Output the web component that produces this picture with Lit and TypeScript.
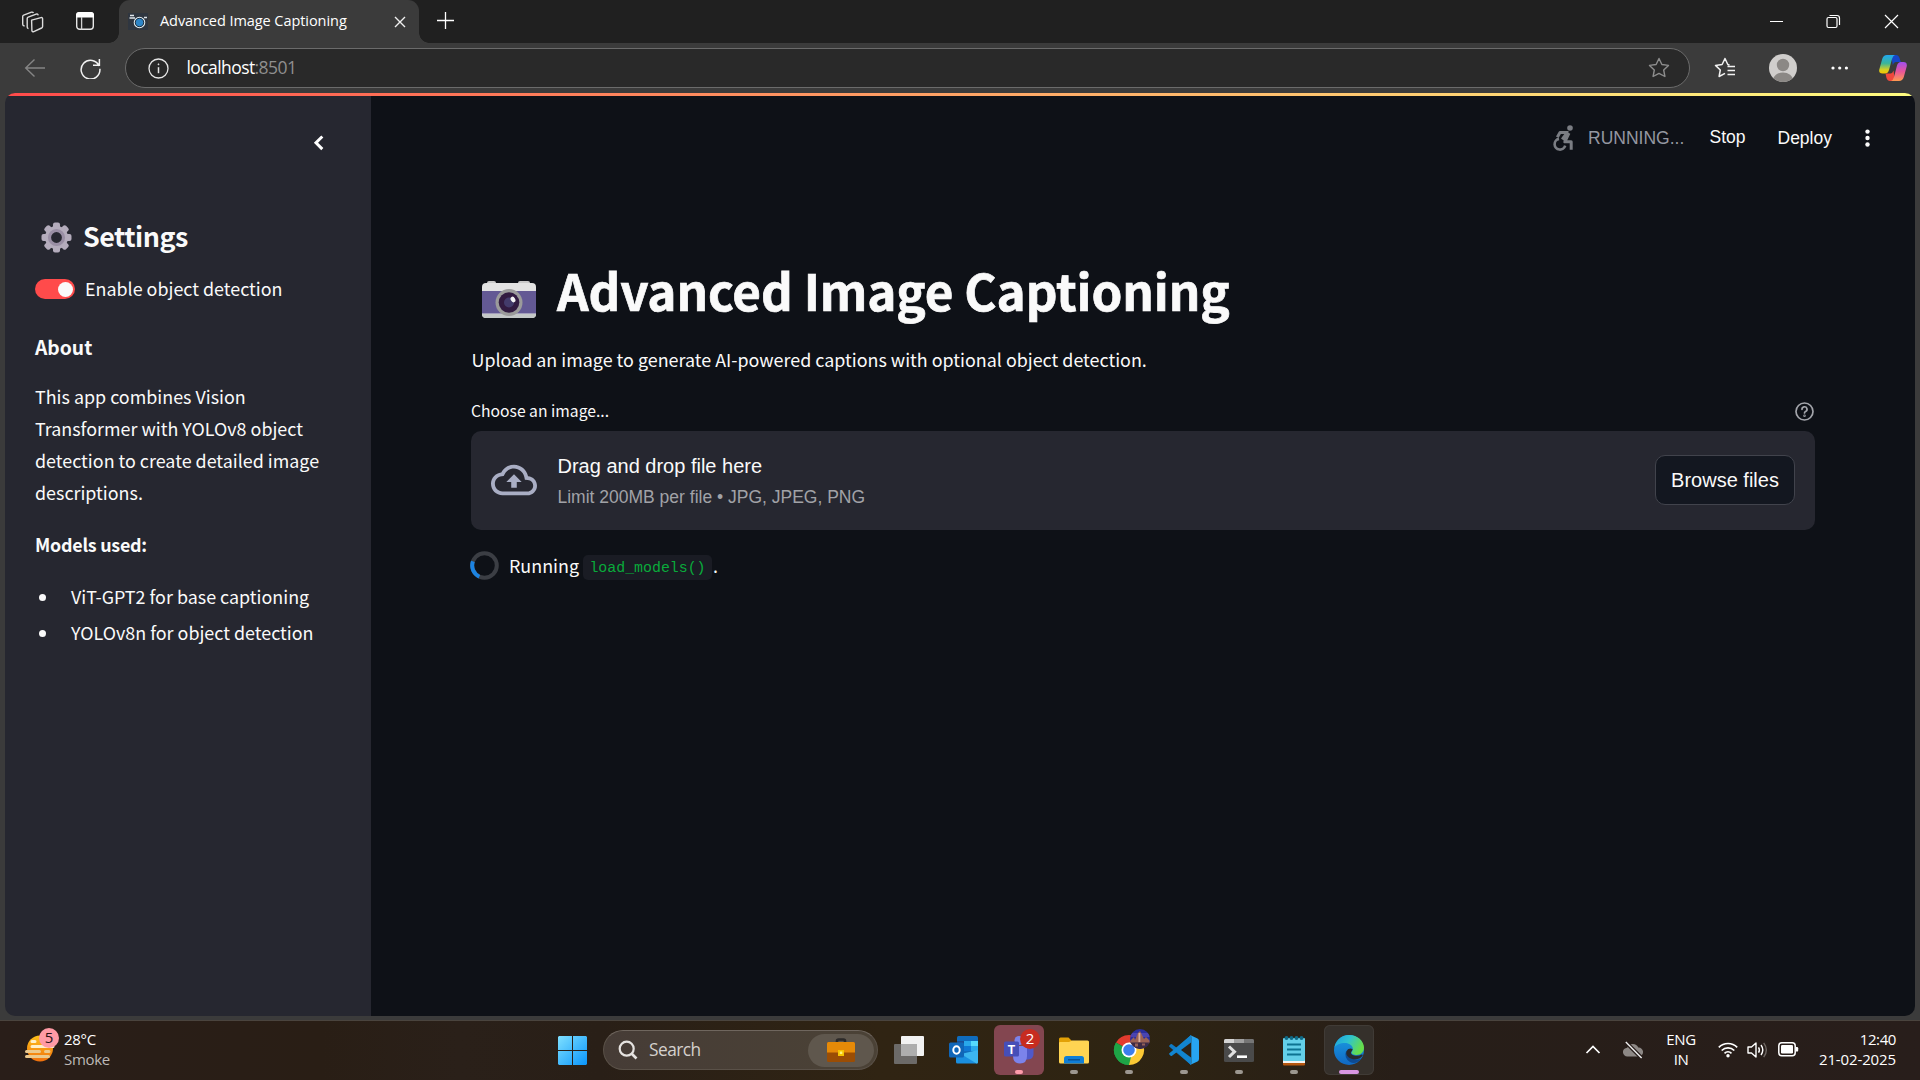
import { LitElement, html, css, svg } from "lit";
import { customElement } from "lit/decorators.js";

@customElement("browser-chrome")
class BrowserChrome extends LitElement {
  static styles = css`
    :host { display: block; font-family: "Open Sans", "Noto Sans", sans-serif; color: #fff; }
    svg { display: block; flex: none; }
    .strip { height: 43px; background: #202020; display: flex; align-items: flex-start; }
    .i1 { margin: 11px 0 0 21px; }
    .i2 { margin: 12px 0 0 32px; }
    .tab { margin-left: 25px; width: 300px; height: 43px; background: #3b3b3b; border-radius: 11px 11px 0 0; display: flex; position: relative; }
    .tab::before, .tab::after { content: ""; position: absolute; bottom: 0; width: 10px; height: 10px; }
    .tab::before { left: -10px; background: radial-gradient(circle at 0 0, transparent 9.5px, #3b3b3b 10px); }
    .tab::after { right: -10px; background: radial-gradient(circle at 100% 0, transparent 9.5px, #3b3b3b 10px); }
    .fav { margin: 13px 0 0 9px; }
    .title { margin: 11px 0 0 12px; width: 234px; font-size: 14.5px; line-height: 20px; letter-spacing: -0.06px; white-space: nowrap; flex: none; }
    .tx { margin-top: 16px; }
    .plus { margin: 12px 0 0 18px; }
    .win { margin-left: auto; display: flex; margin-right: 21px; gap: 43px; padding-top: 14px; }
    .min { margin-right: -1px; }
    .bar { height: 50px; background: #3b3b3b; display: flex; align-items: center; }
    .back { margin-left: 24px; }
    .reload { margin-left: 35px; }
    .pill { box-sizing: border-box; margin-left: 24px; width: 1565px; height: 40px; border: 1px solid #6b6b6b; border-radius: 20px; background: #292929; display: flex; align-items: center; padding: 0 19px 0 21.5px; }
    .url { margin-left: 18px; font-size: 17.5px; letter-spacing: -0.58px; line-height: 24px; margin-top: -2px; }
    .port { color: #8f8f8f; }
    .star { margin-left: auto; }
    .fl { margin-left: 24px; }
    .av { margin-left: 33px; }
    .dots { margin-left: 34px; }
    .cop { margin-left: 30px; }
  `;
  render() {
    return html`
      <div class="strip">
        <svg class="i1" width="23" height="22" viewBox="0 0 23 22" fill="none" stroke="#dcdcdc" stroke-width="1.4" stroke-linejoin="round">
          <path d="M10.6 9.2 20 6.6q1.6-.3 1.6 1.3v7.6q0 1-1 1.5l-7.8 3.6q-1.6.6-1.9-1zM7.5 17.5q-1.3-.2-1.3-1.6V7.6q0-1.1 1-1.5l8-3q1.7-.5 2 1.2M3.6 15q-1.9-.3-1.9-1.8V5.6q0-1.1 1-1.500L10.5 1.2q1.4-.4 1.9.8"/>
        </svg>
        <svg class="i2" width="18" height="18" viewBox="0 0 18 18"><rect x=".7" y=".7" width="16.6" height="16.6" rx="3" fill="none" stroke="#e6e6e6" stroke-width="1.4"/><path d="M0 5.500V3a3 3 0 0 1 3-3h12a3 3 0 0 1 3 3v2.500z" fill="#fff"/><path d="M5.600 5v12.500" stroke="#d0d0d0" stroke-width="1.3"/></svg>
        <div class="tab">
          <svg class="fav" width="20" height="17" viewBox="0 0 20 17"><rect width="20" height="17" fill="#2f3640"/><path d="M2 2.500h4M1.500 5h5.500M16 4.500h3" stroke="#dfe6ea" stroke-width="1.6"/><circle cx="11.5" cy="9.500" r="5.200" fill="#2d86c9" stroke="#dfe6ea" stroke-width="1.2"/><circle cx="11.5" cy="9.500" r="4.200" fill="none" stroke="#22303c" stroke-width="1"/></svg>
          <div class="title">Advanced Image Captioning</div>
          <svg class="tx" width="12" height="12" viewBox="0 0 12 12" stroke="#f0f0f0" stroke-width="1.4"><path d="M1 1l10 10M11 1L1 11"/></svg>
        </div>
        <svg class="plus" width="18" height="18" viewBox="0 0 18 18" stroke="#fff" stroke-width="1.3"><path d="M8.500 0v17M0 8.500h17"/></svg>
        <div class="win">
          <svg class="min" width="15" height="15" viewBox="0 0 15 15" stroke="#fff"><path d="M1 7.500h13"/></svg>
          <svg width="15" height="15" viewBox="0 0 15 15" fill="none" stroke="#fff" stroke-width="1.2"><rect x="1" y="3.500" width="10" height="10" rx="1.5"/><path d="M3.500 1.500h7.500a2.500 2.500 0 0 1 2.500 2.500v7"/></svg>
          <svg width="15" height="15" viewBox="0 0 15 15" stroke="#fff" stroke-width="1.2"><path d="M1 1l13 13M14 1L1 14"/></svg>
        </div>
      </div>
      <div class="bar">
        <svg class="back" width="21" height="20" viewBox="0 0 21 20" fill="none" stroke="#858585" stroke-width="1.4"><path d="M21 10H1.500M10.500 1.500L1.700 10l8.800 8.500"/></svg>
        <svg class="reload" width="21" height="21" viewBox="0 0 21 21" fill="none" stroke="#f2f2f2" stroke-width="1.5"><path d="M19.200 8A9.400 9.400 0 1 0 19.900 10.800M19.400 1v6.300H13"/></svg>
        <div class="pill">
          <svg width="21" height="21" viewBox="0 0 21 21" fill="none" stroke="#e6e6e6" stroke-width="1.3"><circle cx="10.5" cy="10.5" r="9.5"/><path d="M10.500 9.200v6" stroke-width="1.5"/><circle cx="10.5" cy="6.3" r=".6" fill="#e6e6e6" stroke-width=".6"/></svg>
          <div class="url">localhost<span class="port">:8501</span></div>
          <svg class="star" width="22" height="22" viewBox="0 0 22 22" fill="none" stroke="#8d8d8d" stroke-width="1.4" stroke-linejoin="round"><path d="M11 1.500l2.900 6 6.600.9-4.800 4.600 1.200 6.500L11 16.400l-5.900 3.100 1.200-6.500L1.500 8.400l6.600-.9z"/></svg>
        </div>
        <svg class="fl" width="22" height="22" viewBox="0 0 22 22" fill="none" stroke="#f2f2f2" stroke-width="1.5" stroke-linejoin="round"><path d="M15.500 8L13.800 7.500 11 1.500l-2.900 6-6.600.9L6.300 13l-1.200 6.500L11 16.400M13.500 9.500H21M13.500 13.500H21M13.500 17.500H21"/></svg>
        <svg class="av" width="28" height="28" viewBox="0 0 28 28"><defs><clipPath id="c"><circle cx="14" cy="14" r="14"/></clipPath></defs><circle cx="14" cy="14" r="14" fill="#d0cecc"/><g clip-path="url(#c)" fill="#8b8885"><circle cx="14" cy="11" r="6.2"/><ellipse cx="14" cy="26" rx="10" ry="7.5"/></g></svg>
        <svg class="dots" width="18" height="4" viewBox="0 0 18 4" fill="#fff"><circle cx="2" cy="2" r="1.6"/><circle cx="8.7" cy="2" r="1.6"/><circle cx="15.4" cy="2" r="1.6"/></svg>
        <svg class="cop" width="28" height="26" viewBox="0 0 28 26">
          <defs>
            <linearGradient id="a" x1="0" y1="0" x2="0" y2="1"><stop offset="0" stop-color="#21a7f0"/><stop offset=".45" stop-color="#3ab59a"/><stop offset=".8" stop-color="#d8d020"/><stop offset="1" stop-color="#f5c400"/></linearGradient>
            <linearGradient id="b" x1="0" y1="0" x2="0" y2="1"><stop offset="0" stop-color="#a04ff0"/><stop offset=".5" stop-color="#e8559a"/><stop offset="1" stop-color="#ff9a50"/></linearGradient>
          </defs>
          <path d="M12 0h5q2.500 0 3.500 3l1.300 4h-5q-2 0-3 3z" fill="#1646c8"/>
          <path d="M16 26h-5q-2.500 0-3.500-3L6.500 18.500h5q2 0 3-3z" fill="#f0483c"/>
          <path d="M8 0h8q-2 .5-3 4l-3 11q-1 3.500-4 3.500H3.500Q-.5 18.500.3 14.500L3.200 4Q4.400 0 8 0z" fill="url(#a)"/>
          <path d="M20 26h-8q2-.5 3-4l3-11.500Q19 7 22 7h2.500Q28.500 7 27.700 11.500L24.800 22Q23.600 26 20 26z" fill="url(#b)"/>
        </svg>
      </div>`;
  }
}

@customElement("side-panel")
class SidePanel extends LitElement {
  static styles = css`
    :host { display: block; width: 366px; height: 923px; background: #262730; box-sizing: border-box; padding-left: 30px; font-family: "Noto Sans CJK SC", "Open Sans", sans-serif; color: #fafafa; font-size: 17.9px; line-height: 32px; white-space: nowrap; }
    svg { display: block; }
    .chev { padding: 42px 0 0 278px; height: 82px; }
    .h2 { display: flex; align-items: center; height: 36px; font-size: 26.9px; line-height: 38px; font-weight: 700; letter-spacing: -0.5px; padding-top: 1px; margin-bottom: -1px; }
    .gear { margin: 2px 11.5px 0 5.5px; }
    .sw { display: flex; align-items: center; margin-top: 19px; height: 32px; }
    .track { width: 40px; height: 20px; border-radius: 10px; background: #ff4b4b; display: flex; align-items: center; justify-content: flex-end; padding-right: 2px; box-sizing: border-box; margin: 2px 10px 0 0; }
    .knob { width: 15px; height: 15px; border-radius: 50%; background: #fafafa; }
    .h3 { margin-top: 27px; font-weight: 700; font-size: 19.3px; }
    .p { margin-top: 17px; }
    .b { margin-top: 20px; font-weight: 700; letter-spacing: -0.25px; }
    .list { margin-top: 20px; display: flex; flex-direction: column; gap: 4px; }
    .li { display: flex; align-items: center; }
    .dot { width: 7px; height: 7px; border-radius: 50%; background: #fafafa; margin: 2px 25px 0 4px; }
  `;
  render() {
    const teeth = [0, 45, 90, 135, 180, 225, 270, 315];
    return html`
      <div class="chev"><svg width="12" height="16" viewBox="0 0 12 16" fill="none" stroke="#fff" stroke-width="3"><path d="M9.300 1.500L3 7.800l6.300 6.300"/></svg></div>
      <div class="h2">
        <svg class="gear" width="31" height="31" viewBox="0 0 31 31">
          <g fill="#b4acbc"><circle cx="15.5" cy="15.5" r="11.5"/>${teeth.map((a) => svg`<rect x="12" y=".5" width="7" height="8" rx="2" transform="rotate(${a} 15.5 15.5)"/>`)}</g>
          <circle cx="15.5" cy="15.5" r="7" fill="#262730" stroke="#998ea4" stroke-width="3.2"/>
        </svg><span>Settings</span>
      </div>
      <div class="sw"><div class="track"><div class="knob"></div></div><span>Enable object detection</span></div>
      <div class="h3">About</div>
      <div class="p">This app combines Vision<br />Transformer with YOLOv8 object<br />detection to create detailed image<br />descriptions.</div>
      <div class="b">Models used:</div>
      <div class="list">
        <div class="li"><div class="dot"></div><span>ViT-GPT2 for base captioning</span></div>
        <div class="li"><div class="dot"></div><span>YOLOv8n for object detection</span></div>
      </div>`;
  }
}

@customElement("main-view")
class MainView extends LitElement {
  static styles = css`
    :host { display: block; width: 1544px; height: 923px; background: #0e1117; box-sizing: border-box; font-family: "Noto Sans CJK SC", "Open Sans", sans-serif; color: #fafafa; font-size: 17.9px; line-height: 32px; white-space: nowrap; }
    svg { display: block; flex: none; }
    .head { display: flex; height: 162px; padding-left: 1181px; font: 17.5px/24px "Liberation Sans", Arial, sans-serif; align-items: flex-start; }
    .acc { margin-top: 32px; }
    .run { margin: 33px 0 0 14px; width: 121.5px; color: #9497a1; }
    .stop { margin: 32px 0 0 0; width: 68px; }
    .dep { margin: 33px 0 0 0; width: 87.5px; }
    .keb { margin-top: 36px; }
    .col { padding: 0 100px; }
    .h1 { display: flex; height: 66px; font-size: 49.4px; line-height: 66px; font-weight: 700; letter-spacing: -0.14px; -webkit-text-stroke: 0.7px #fafafa; }
    .h1 span { margin-top: 2px; }
    .cam { margin: 26px 20px 0 10px; }
    .p { margin-top: 22px; padding-left: 0.5px; }
    .lab { margin-top: 22px; display: flex; justify-content: space-between; align-items: center; height: 26px; font-size: 15.7px; line-height: 26px; }
    .lab span { padding-top: 1px; }
    .help { margin: 3px 1px 0 0; }
    .drop { margin-top: 8px; height: 99px; background: #262730; border-radius: 10px; display: flex; align-items: center; padding: 0 20px; font-family: "Liberation Sans", Arial, sans-serif; }
    .cloud { margin-top: -1px; }
    .two { margin-left: 20.5px; display: flex; flex-direction: column; padding-top: 2px; }
    .l1 { font-size: 20px; line-height: 30px; }
    .l2 { margin-top: 1px; font-size: 17.5px; line-height: 30px; color: #a1a2a7; }
    .btn { margin: -1px 0 0 auto; box-sizing: border-box; width: 140px; height: 50px; border: 1px solid #41434c; border-radius: 10px; background: #131720; display: flex; align-items: center; justify-content: center; font-size: 20px; padding-bottom: 1px; }
    .spin { margin-top: 19px; display: flex; align-items: center; height: 32px; }
    .ring { margin: 1px 10px 0 -1px; }
    .code { margin-left: 4px; margin-top: 5px; box-sizing: border-box; height: 25px; width: 129px; text-align: center; border-radius: 5px; background: #1a1c24; color: #09ab3b; font: 14.9px/26px "Liberation Mono", monospace; }
    .end { margin-left: 1px; }
  `;
  render() {
    return html`
      <div class="head">
        <svg class="acc" width="22" height="27" viewBox="0 0 22 27"><circle cx="18" cy="3" r="2.8" fill="#7a7d83"/><path d="M17 8.200L12.800 16.800h6.400v8M5.300 12.200L8 7.600h8.500" fill="none" stroke="#7a7d83" stroke-width="3" stroke-linejoin="round"/><path d="M13 8l3.500 2-3.500 6.500-4-3z" fill="#7a7d83"/><path d="M7 13.900a5.400 5.400 0 1 0 6.200 6.800" fill="none" stroke="#7a7d83" stroke-width="2.6"/></svg>
        <div class="run">RUNNING...</div>
        <div class="stop">Stop</div>
        <div class="dep">Deploy</div>
        <svg class="keb" width="6" height="18" viewBox="0 0 6 18" fill="#fafafa"><circle cx="2.5" cy="2.6" r="2.2"/><circle cx="2.5" cy="9" r="2.2"/><circle cx="2.5" cy="15.5" r="2.2"/></svg>
      </div>
      <div class="col">
        <div class="h1">
          <svg class="cam" width="56" height="38" viewBox="0 0 56 38"><rect x="6" y="0" width="9" height="5" rx="2" fill="#c9c9c9"/><rect x="37" y="0" width="12" height="5" rx="2" fill="#c9c9c9"/><rect x="1" y="2" width="54" height="35" rx="4" fill="#e3e3e3"/><path d="M1 33h54q0 4-4 4H5q-4 0-4-4z" fill="#c4c8c8"/><rect x="1" y="10" width="54" height="22.5" fill="#635994"/><circle cx="28" cy="21.5" r="13.5" fill="#9b9b9b"/><circle cx="28" cy="21.5" r="10.3" fill="#321b41"/><circle cx="28" cy="21.5" r="5" fill="#433b6b"/><ellipse cx="32" cy="18.5" rx="2.2" ry="3" fill="#f4f4f4" transform="rotate(-30 32 18.5)"/></svg>
          <span>Advanced Image Captioning</span>
        </div>
        <div class="p">Upload an image to generate AI-powered captions with optional object detection.</div>
        <div class="lab"><span>Choose an image...</span>
          <svg class="help" width="19" height="19" viewBox="0 0 19 19" fill="none" stroke="#a3a5ab" stroke-width="1.7" stroke-linecap="round"><circle cx="9.5" cy="9.5" r="8.5"/><path d="M7 7.300a2.500 2.500 0 1 1 3.600 2.200q-1.100.6-1.100 1.500"/><circle cx="9.5" cy="13.7" r=".4"/></svg>
        </div>
        <div class="drop">
          <svg class="cloud" width="46" height="46" viewBox="0 0 24 24" fill="#a9aec4"><path d="M19.350 10.040C18.670 6.590 15.640 4 12 4 9.110 4 6.600 5.640 5.350 8.040 2.340 8.360 0 10.910 0 14c0 3.310 2.690 6 6 6h13c2.760 0 5-2.240 5-5 0-2.640-2.050-4.780-4.650-4.960zM19 18H6c-2.210 0-4-1.790-4-4 0-2.050 1.530-3.760 3.560-3.970l1.070-.110.500-.950C8.080 7.140 9.940 6 12 6c2.620 0 4.880 1.860 5.390 4.430l.300 1.500 1.530.110c1.560.100 2.780 1.410 2.780 2.960 0 1.650-1.350 3-3 3zM8 13h2.550v3h2.900v-3H16l-4-4z"/></svg>
          <div class="two"><span class="l1">Drag and drop file here</span><span class="l2">Limit 200MB per file • JPG, JPEG, PNG</span></div>
          <div class="btn">Browse files</div>
        </div>
        <div class="spin">
          <svg class="ring" width="29" height="29" viewBox="0 0 29 29" fill="none" stroke-width="4"><circle cx="14.5" cy="14.5" r="12.3" stroke="#3b3e44"/><path d="M2.900 10.400A12.300 12.300 0 0 0 9.300 25.700" stroke="#1c83e1"/></svg>
          <span>Running</span><span class="code">load_models()</span><span class="end">.</span>
        </div>
      </div>`;
  }
}

@customElement("task-bar")
class TaskBar extends LitElement {
  static styles = css`
    :host { display: flex; box-sizing: border-box; height: 60px; border-top: 1px solid #4a443e; background: linear-gradient(90deg, #291e19 0, #291e15 320px, #2a2019 460px, #291f17 600px, #302413 880px, #2e2412 1130px, #271e18 1400px, #281e1b 1920px); font: 15px/20px "Open Sans", "Noto Sans", sans-serif; color: #fff; align-items: flex-start; white-space: nowrap; }
    svg { display: block; flex: none; }
    .wx { margin: 5px 0 0 24px; width: 36px; }
    .wt { margin: 8px 0 0 4px; width: 494px; letter-spacing: -0.3px; }
    .dim { color: #bdb9b6; }
    .logo { margin-top: 15px; }
    .search { margin: 9px 0 0 16px; box-sizing: border-box; width: 275px; height: 40px; border: 1px solid #5a5148; border-top-color: #6f665e; border-radius: 20px; background: linear-gradient(90deg, #463c36, #4b4236); display: flex; align-items: center; padding: 0 3px 0 13.5px; }
    .st { margin: 0 0 0 11.5px; font-size: 17.3px; color: #d5d1cd; letter-spacing: -0.5px; line-height: 24px; }
    .case { margin-left: auto; width: 66px; height: 33px; border-radius: 17px; background: #5f574d; display: flex; align-items: center; justify-content: center; }
    .apps { margin: 4px 0 0 6px; display: flex; gap: 5px; }
    .app { width: 50px; height: 50px; border-radius: 6px; position: relative; display: flex; align-items: center; justify-content: center; }
    .teams { background: #834650; }
    .edge { background: #35302b; box-shadow: inset 0 0 0 1px #403b36; }
    .ind { position: absolute; bottom: 1px; left: 21px; width: 8px; height: 4px; border-radius: 2px; background: #9c9790; }
    .pink { background: #ff9cab; }
    .wide { left: 15px; width: 20px; background: #d896e2; }
    .badge { position: absolute; left: 26px; top: 4px; width: 20px; height: 20px; border-radius: 50%; background: #c72c20; text-align: center; font-size: 15px; line-height: 19px; }
    .tray { display: flex; margin-left: 211px; align-items: flex-start; }
    .ca { margin-top: 24px; }
    .od { margin: 20px 0 0 22px; }
    .eng { margin: 8px 0 0 17px; width: 42px; text-align: center; letter-spacing: -0.4px; }
    .wf { margin: 20px 0 0 16px; }
    .vo { margin: 20px 0 0 9px; }
    .ba { margin: 21px 0 0 10px; }
    .clock { margin: 8px 0 0 9px; width: 88px; text-align: right; letter-spacing: -0.4px; }
    .date { letter-spacing: -0.12px; }
  `;
  render() {
    const ind = html`<div class="ind"></div>`;
    return html`
      <svg class="wx" width="36" height="36" viewBox="0 0 36 36">
        <defs><linearGradient id="s" x1="0" y1="0" x2="0" y2="1"><stop offset="0" stop-color="#ffc21a"/><stop offset="1" stop-color="#f0700c"/></linearGradient></defs>
        <circle cx="16" cy="22.5" r="13" fill="url(#s)"/>
        <g stroke-linecap="round" stroke-width="3"><path d="M8 15.500h3M8 20.500h21" stroke="#fff0c8"/><path d="M2.500 25.500h13M21.500 25.500h3.500M2.500 30.500h22" stroke="#ecc98c"/></g>
        <circle cx="25" cy="12" r="10" fill="#ff9aa5"/>
        <text x="25" y="17.3" font-size="15" text-anchor="middle" fill="#2a1115">5</text>
      </svg>
      <div class="wt">28°C<br /><span class="dim">Smoke</span></div>
      <svg class="logo" width="29" height="29" viewBox="0 0 29 29"><defs><linearGradient id="w" x1="0" y1="0" x2="1" y2="1"><stop offset="0" stop-color="#7fe0ff"/><stop offset="1" stop-color="#0a95fb"/></linearGradient></defs><path d="M1 0h13v14H0V1zM15 0h13l1 1v13H15zM0 15h14v14H1l-1-1zM15 15h14v13l-1 1H15z" fill="url(#w)"/></svg>
      <div class="search">
        <svg width="20" height="20" viewBox="0 0 20 20" fill="none" stroke="#e6e3e0" stroke-width="2.2"><circle cx="8.7" cy="8.7" r="7"/><path d="M13.500 13.500l5 5" stroke-width="2.6"/></svg>
        <div class="st">Search</div>
        <div class="case"><svg width="28" height="24" viewBox="0 0 28 24"><path d="M10 5V3q0-1.500 1.500-1.500h5Q18 1.500 18 3v2" fill="none" stroke="#2c2a29" stroke-width="2.6"/><rect y="4" width="28" height="20" rx="1.5" fill="#9a4d05"/><path d="M0 14.500V5.500Q0 4 1.500 4h25Q28 4 28 5.500v9z" fill="#e68a08"/><rect x="11" y="12" width="6" height="6" fill="#f5c400"/><rect x="12.8" y="13.5" width="2.5" height="2.5" fill="#fff27a"/></svg></div>
      </div>
      <div class="apps">
        <div class="app"><svg width="30" height="28" viewBox="0 0 30 28"><rect y="8" width="23" height="20" rx="1" fill="#6c6a68"/><rect x="7" y="0" width="23" height="20" rx="1" fill="#f2f2f2"/><path d="M7 8h16v12H7z" fill="#aeaeae"/></svg></div>
        <div class="app"><svg width="30" height="28" viewBox="0 0 30 28"><rect x="8" y="0" width="21" height="18" rx="1.5" fill="#0f6cbd"/><path d="M8 5h7v5H8z" fill="#1a4f96"/><path d="M15 5h7v5h-7z" fill="#29a8ea"/><path d="M22 5h7v5h-7z" fill="#55d9fb"/><path d="M15 10h7v5h-7z" fill="#0f78d4"/><path d="M22 10h7v5h-7z" fill="#29a8ea"/><path d="M7 14l11 7 11-7v12q0 1.500-1.500 1.500h-19Q7 27.500 7 26z" fill="#1a8fe0"/><path d="M29 14v12q0 1.500-1.500 1.500L12 18z" fill="#3cb6f0"/><rect y="6.5" width="15" height="15" rx="1.5" fill="#1066b8"/><ellipse cx="7.5" cy="14" rx="3.2" ry="3.7" fill="none" stroke="#fff" stroke-width="2"/></svg></div>
        <div class="app teams">
          <svg width="30" height="28" viewBox="0 0 30 28"><circle cx="15" cy="4.5" r="4.5" fill="#7b83eb"/><path d="M19 10h8q2.500 0 2.500 2.500V18q0 5-5.500 5.500h-5z" fill="#5059c9"/><path d="M9 10h14v10q0 7.500-7 7.500T9 20z" fill="#7b83eb"/><rect y="5.5" width="15" height="15" rx="1.5" fill="#464eb8"/><text x="7.5" y="17.5" font-family="Liberation Sans" font-weight="700" font-size="12" text-anchor="middle" fill="#fff">T</text></svg>
          <div class="badge">2</div><div class="ind pink"></div>
        </div>
        <div class="app"><svg width="30" height="27" viewBox="0 0 30 27"><path d="M0 2Q0 .5 1.500.500h8L13 4h15q2 0 2 2v6H0z" fill="#e2a106"/><path d="M0 6q0-1 1-1h9l3-1.500h15.500Q30 3.500 30 5v20q0 1.500-1.500 1.500h-27Q0 26.500 0 25z" fill="#ffd452"/><path d="M5 26.500v-5Q5 19 7.500 19h15q2.500 0 2.500 2.500v5z" fill="#0f7ed6"/><path d="M9 22.800h12" stroke="#0a4d8c" stroke-width="1.3"/></svg>${ind}</div>
        <div class="app"><svg width="42" height="42" viewBox="0 0 42 42">
          <defs><clipPath id="av"><circle cx="32" cy="10" r="10"/></clipPath></defs>
          <g transform="translate(6 6)"><path d="M15 15L2 7.500A15 15 0 0 1 28 7.500z" fill="#e33b2e"/><path d="M15 15L28 7.500A15 15 0 0 1 15 30z" fill="#fcc934"/><path d="M15 15v15A15 15 0 0 1 2 7.500z" fill="#1ea446"/><path d="M15 7.500h13L21 19 15 30l4-11z" fill="#fcc934"/><path d="M2 7.500L9 19l8 3-2 8A15 15 0 0 1 2 7.500z" fill="#1ea446"/><circle cx="15" cy="15" r="7.5" fill="#fff"/><circle cx="15" cy="15" r="5.8" fill="#3b7ded"/></g>
          <g clip-path="url(#av)"><path d="M22 0h20v20H22z" fill="#2b2f9e"/><path d="M22 4h20v4H22z" fill="#4a44b0"/><path d="M22 12l4-4 1 3 3-7 2-2 1 2 3 6 2-2 4 4v3H22z" fill="#9c6254"/><path d="M30.500 4h1.800v9h-1.800z" fill="#d8b0a0"/><path d="M22 13.500h20V20H22z" fill="#3d2a44"/><path d="M27 14.500h3v3h-3zM34 14.500h3v2h-3z" fill="#94605a"/></g></svg>${ind}</div>
        <div class="app"><svg width="30" height="30" viewBox="0 0 30 30"><path d="M22 0L8 13 3 9.300Q2.300 8.800 1.600 9.300L.400 10.400q-.6.700 0 1.400L22 30z" fill="#0f7ac5"/><path d="M22 30L8 17l-5 3.700q-.7.500-1.400 0L.400 19.600q-.6-.7 0-1.400L22 0z" fill="#1285d0"/><path d="M22 7.500L12 15l10 7.500z" fill="#2c2318"/><path d="M21.500.200L28.500 3.500Q30 4.200 30 6v18q0 1.800-1.500 2.500L21.500 29.800q.8-.6.8-2V2.200q0-1.400-.8-2z" fill="#27a5f2"/></svg>${ind}</div>
        <div class="app"><svg width="30" height="23" viewBox="0 0 30 23"><rect width="30" height="23" rx="1.5" fill="#4a4a4a"/><path d="M0 4V1.500Q0 0 1.500 0H10v4z" fill="#d4d4d4"/><path d="M10 0h10v4H10z" fill="#a0a0a0"/><path d="M20 0h8.500Q30 0 30 1.500V4H20z" fill="#757575"/><path d="M5 7.500l5.500 5.200L5 18" fill="none" stroke="#e0e0e0" stroke-width="3"/><path d="M13 17.700h10" stroke="#fff" stroke-width="2.6"/></svg>${ind}</div>
        <div class="app"><svg width="24" height="31" viewBox="0 0 24 31"><rect x="1" y="25" width="22" height="5.5" rx="1" fill="#b5560f"/><rect x="1" y="24" width="22" height="4" fill="#f3f3f3"/><rect x="1" y="3" width="22" height="23" rx="1" fill="#63cfe8"/><g fill="#0f6a86"><circle cx="4.5" cy="3" r="2"/><circle cx="9.5" cy="3" r="2"/><circle cx="14.5" cy="3" r="2"/><circle cx="19.5" cy="3" r="2"/></g><path d="M5 9.500h14M5 14.500h14M5 19.500h14" stroke="#0d7391" stroke-width="2"/></svg>${ind}</div>
        <div class="app edge"><svg width="30" height="30" viewBox="0 0 30 30">
          <defs><linearGradient id="e1" x1="0" y1="0" x2="1" y2=".4"><stop offset="0" stop-color="#1d9fe0"/><stop offset=".5" stop-color="#2fc3cf"/><stop offset="1" stop-color="#66dd4a"/></linearGradient><linearGradient id="e2" x1="0" y1="0" x2="0" y2="1"><stop offset="0" stop-color="#1b9de2"/><stop offset="1" stop-color="#1068c4"/></linearGradient></defs>
          <circle cx="15" cy="15" r="15" fill="url(#e2)"/>
          <path d="M.500 12.500C1.800 5 7.800 0 15 0c8.500 0 15 6 15 12.800 0 4.700-3.500 7.200-7.500 7.200-3 0-5-1-5-2.200 0-.9 1.300-1.500 1.300-4C18.800 10.500 15 8 11 8 6 8 2 10 .500 12.500z" fill="url(#e1)"/>
          <path d="M12.200 15.500q-2.700 7.500 3.800 11.500 6 3 11.500-3.500-3.500 1.500-7.500.500-6-1.500-7-6.500z" fill="#0d4a92"/>
          <path d="M27.500 19.500q-2 1.300-5 1.300c-3 0-5.500-1.200-5.500-3q0-.8.800-1.800.800-1 .800-2-4.600-1.500-6.200 2.500-1 5 5 7.300 7.500 2 11.300-3.300.3-1.300-1.200-1z" fill="#292a2e"/></svg><div class="ind wide"></div></div>
      </div>
      <div class="tray">
        <svg class="ca" width="16" height="9" viewBox="0 0 16 9" fill="none" stroke="#fff" stroke-width="1.7"><path d="M1.500 8L8 1.500 14.500 8"/></svg>
        <svg class="od" width="20" height="18" viewBox="0 0 20 18"><path d="M4.500 15.500a4.400 4.400 0 0 1-.3-8.800A6 6 0 0 1 15.300 6.500a4.500 4.500 0 0 1 .5 9z" fill="#8d8885"/><path d="M2.800 1.200l15.500 15.500" stroke="#281e1b" stroke-width="4"/><path d="M2.800 1l15.800 16" stroke="#f0f0f0" stroke-width="1.4"/></svg>
        <div class="eng">ENG<br />IN</div>
        <svg class="wf" width="20" height="17" viewBox="0 0 20 17" fill="none" stroke="#fff" stroke-width="1.7"><path d="M.800 6.300a13 13 0 0 1 18.400 0M3.700 9.500a9 9 0 0 1 12.600 0M6.500 12.300a5 5 0 0 1 7 0"/><circle cx="10" cy="14.8" r="1.7" fill="#fff" stroke="none"/></svg>
        <svg class="vo" width="21" height="18" viewBox="0 0 21 18" fill="none" stroke="#fff" stroke-width="1.4" stroke-linejoin="round"><path d="M1 6h3.500L9 2v14l-4.500-4H1z"/><path d="M11.500 6.300q1.800 2.700 0 5.400M14 4q3.600 5 0 10"/><path d="M16.700 1.800q5.300 7.200 0 14.400" stroke="#6e6763"/></svg>
        <svg class="ba" width="21" height="15" viewBox="0 0 21 15"><rect x=".8" y=".8" width="16.4" height="13" rx="3" fill="none" stroke="#fff" stroke-width="1.5"/><rect x="3" y="3" width="12" height="8.6" rx="1.3" fill="#fff"/><path d="M18 5h1q1.200 0 1.200 1.200v2.200q0 1.200-1.200 1.200h-1z" fill="#fff"/></svg>
        <div class="clock">12:40<br /><span class="date">21-02-2025</span></div>
      </div>`;
  }
}

@customElement("app-root")
class AppRoot extends LitElement {
  static styles = css`
    :host { display: block; width: 1920px; height: 1080px; background: #3b3b3b; overflow: hidden; }
    .page { display: flex; position: relative; margin: 0 5px; height: 923px; border-radius: 10px; overflow: hidden; }
    .line { position: absolute; inset: 0 0 auto 0; height: 3px; background: linear-gradient(90deg, #ff4b4b, #fffd80); }
    .gap { height: 4px; }
  `;
  render() {
    return html`
      <browser-chrome></browser-chrome>
      <div class="page"><side-panel></side-panel><main-view></main-view><div class="line"></div></div>
      <div class="gap"></div>
      <task-bar></task-bar>`;
  }
}
